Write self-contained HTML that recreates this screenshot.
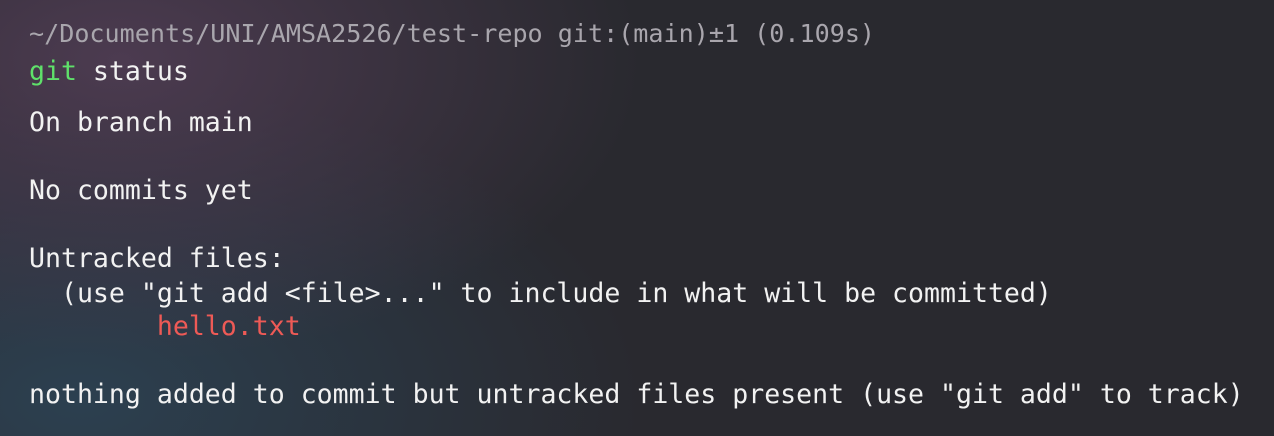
<!DOCTYPE html>
<html><head><meta charset="utf-8"><style>
html,body{margin:0;padding:0}
body{width:1274px;height:436px;overflow:hidden;position:relative;
background:
radial-gradient(ellipse 520px 300px at 120px 60px, rgba(78,60,82,0.95), rgba(78,60,82,0) 100%),
radial-gradient(ellipse 560px 320px at 80px 400px, rgba(44,64,80,1), rgba(44,64,80,0) 100%),
#29292f;
font-family:"DejaVu Sans Mono","Liberation Mono",monospace;font-size:26.55px;color:#f2f2f2}
.l{position:absolute;left:29px;height:34px;line-height:34px;white-space:pre}
.g{color:#5fe06a}.r{color:#ee5a56}.p{color:#a9a6ad;font-size:25.1px}
</style></head><body>
<div class="l p" style="top:17px">~/Documents/UNI/AMSA2526/test-repo git:(main)±1 (0.109s)</div>
<div class="l" style="top:55px"><span class="g">git</span> status</div>
<div class="l" style="top:106px">On branch main</div>
<div class="l" style="top:174px">No commits yet</div>
<div class="l" style="top:242px">Untracked files:</div>
<div class="l" style="top:277px">  (use "git add &lt;file&gt;..." to include in what will be committed)</div>
<div class="l r" style="top:310px">        hello.txt</div>
<div class="l" style="top:378px">nothing added to commit but untracked files present (use "git add" to track)</div>
</body></html>
